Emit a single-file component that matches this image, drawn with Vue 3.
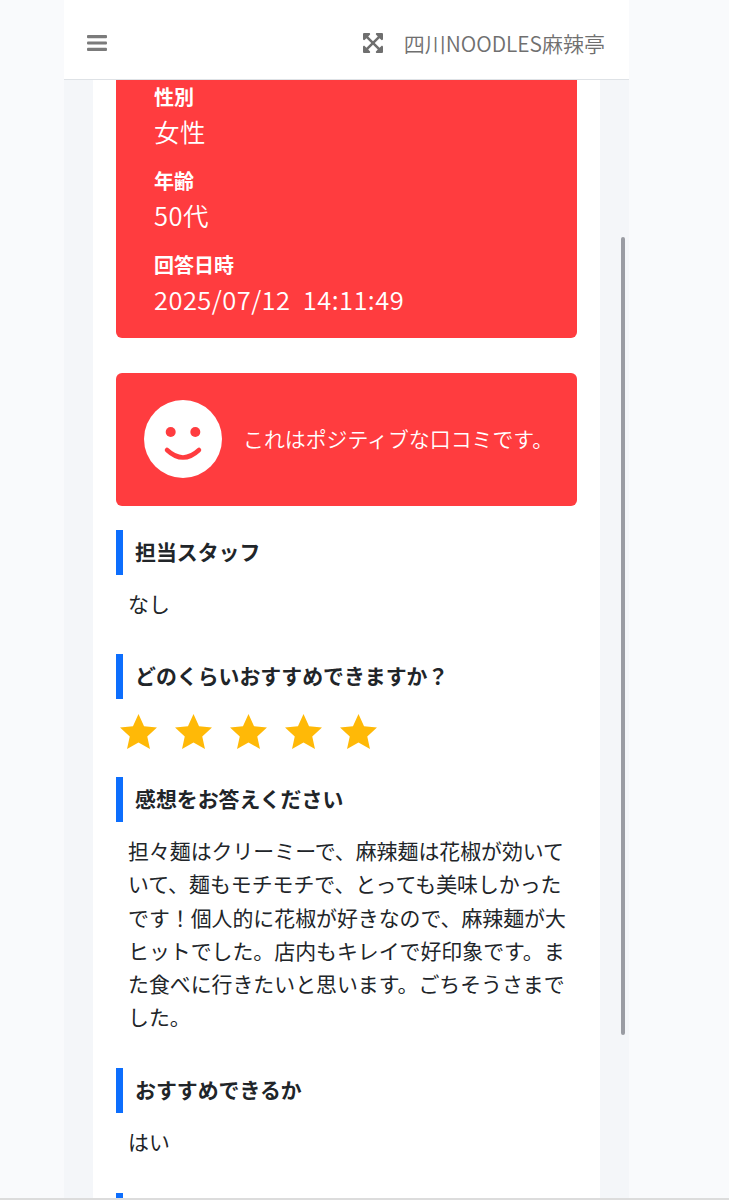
<script setup>
const infos = [
  { label: '性別', value: '女性' },
  { label: '年齢', value: '50代' },
  { label: '回答日時', value: '2025/07/12  14:11:49' },
]
const stars = [1, 2, 3, 4, 5]
</script>

<template>
  <div class="screen">
    <div class="wrapper">
      <header class="navbar">
        <svg class="menu" viewBox="0 0 20 18" width="20" height="18">
          <rect y="1" width="20" height="3.200" rx="1" fill="#7b7b7b" />
          <rect y="7.400" width="20" height="3.200" rx="1" fill="#7b7b7b" />
          <rect y="13.800" width="20" height="3.200" rx="1" fill="#7b7b7b" />
        </svg>
        <div class="nav-right">
          <svg class="expand" viewBox="0 32 448 448" width="20" height="20">
            <path d="M448 344v112a23.94 23.94 0 0 1-24 24H312c-21.39 0-32.09-25.9-17-41l36.2-36.2L224 295.6 116.77 402.9 153 439c15.09 15.1 4.39 41-17 41H24a23.94 23.94 0 0 1-24-24V344c0-21.4 25.89-32.1 41-17l36.19 36.2L184.46 256 77.18 148.7 41 185c-15.1 15.1-41 4.4-41-17V56a23.94 23.94 0 0 1 24-24h112c21.39 0 32.09 25.9 17 41l-36.2 36.2L224 216.4l107.23-107.3L295 73c-15.09-15.1-4.39-41 17-41h112a23.94 23.94 0 0 1 24 24v112c0 21.4-25.89 32.1-41 17l-36.19-36.2L263.54 256l107.28 107.3L407 327.1c15.1-15.2 41-4.5 41 16.9z" fill="#6f6f6f" />
          </svg>
          <span class="shop">四川NOODLES麻辣亭</span>
        </div>
      </header>

      <main class="content">
        <div class="card">
          <section class="panel info">
            <div v-for="info in infos" :key="info.label" class="info-row">
              <div class="info-label">{{ info.label }}</div>
              <div class="info-value">{{ info.value }}</div>
            </div>
          </section>

          <section class="panel sentiment">
            <svg class="smile" viewBox="0 0 78 78" width="78" height="78">
              <circle cx="39" cy="39" r="39" fill="#fff" />
              <circle cx="26.700" cy="32" r="5" fill="#ff3c3f" />
              <circle cx="51.300" cy="32" r="5" fill="#ff3c3f" />
              <path d="M23 50Q39 65 55 50" fill="none" stroke="#ff3c3f" stroke-width="4.500" stroke-linecap="round" />
            </svg>
            <p>これはポジティブな口コミです。</p>
          </section>

          <h2 class="heading first">担当スタッフ</h2>
          <p class="answer">なし</p>

          <h2 class="heading">どのくらいおすすめできますか？</h2>
          <div class="stars">
            <svg v-for="s in stars" :key="s" viewBox="0 0 38 36" width="37" height="35">
              <path d="M19 0l5.700 12.500L38 14l-10 9.200L30.800 36 19 29.300 7.200 36 10 23.200 0 14l13.300-1.500z" fill="#ffb907" />
            </svg>
          </div>

          <h2 class="heading after-stars">感想をお答えください</h2>
          <p class="answer long">担々麺はクリーミーで、麻辣麺は花椒が効いていて、麺もモチモチで、とっても美味しかったです！個人的に花椒が好きなので、麻辣麺が大ヒットでした。店内もキレイで好印象です。また食べに行きたいと思います。ごちそうさまでした。</p>

          <h2 class="heading">おすすめできるか</h2>
          <p class="answer">はい</p>

          <h2 class="heading"></h2>
        </div>
      </main>

      <div class="scrollbar"></div>
    </div>
  </div>
</template>

<style>
html, body {
  margin: 0;
  height: 1200px;
  overflow: hidden;
}
</style>

<style scoped>
.screen {
  height: 1198px;
  overflow: hidden;
  background: #f9fafc;
  border-bottom: 2px solid #dcdcdc;
  font-family: "Noto Sans CJK JP", "Noto Sans", sans-serif;
}
.wrapper {
  position: relative;
  width: 565px;
  height: 100%;
  margin-left: 64px;
  background: #f4f6f9;
}
.navbar {
  height: 80px;
  box-sizing: border-box;
  padding: 6px 24px 0 23px;
  display: flex;
  align-items: center;
  justify-content: space-between;
  background: #fff;
  border-bottom: 1px solid #dee2e6;
  color: #6f6f6f;
}
.nav-right {
  display: flex;
  align-items: center;
  gap: 21px;
}
.expand {
  display: block;
}
.shop {
  font-size: 21px;
  font-weight: 350;
}
.content {
  margin: 0 29px;
  background: #fff;
}
.card {
  padding: 0 23px;
}
.panel {
  background: #ff3c3f;
  color: #fff;
  border-radius: 0 0 6px 6px;
}
.info {
  padding: 2px 38px 21px;
}
.info-row + .info-row {
  margin-top: 17px;
}
.info-label {
  font-size: 20px;
  font-weight: 700;
  line-height: 30px;
}
.info-value {
  font-size: 25.500px;
  line-height: 37px;
  white-space: pre;
  font-weight: 350;
  letter-spacing: 0.45px;
}
.sentiment {
  margin-top: 35px;
  height: 133px;
  padding-left: 28px;
  border-radius: 6px;
  display: flex;
  align-items: center;
  gap: 21px;
}
.sentiment p {
  margin: 0 0 3px;
  font-size: 20.900px;
  font-weight: 350;
}
.smile {
  flex: none;
  margin-bottom: 2px;
}
.heading {
  margin: 34px 0 0;
  height: 45px;
  box-sizing: border-box;
  border-left: 7px solid #0d6efd;
  padding-left: 12px;
  font-size: 20.900px;
  font-weight: 700;
  line-height: 43px;
  color: #212529;
}
.heading.first {
  margin-top: 24px;
}
.heading.after-stars {
  margin-top: 28px;
}
.answer {
  margin: 12px 0 0;
  padding: 0 4px 0 12px;
  font-size: 20.900px;
  line-height: 33.200px;
  color: #212529;
}
.answer.long {
  margin-bottom: 35px;
}
.stars {
  margin-top: 15px;
  display: flex;
  gap: 18px;
  padding-left: 4px;
}
.stars svg {
  display: block;
}
.scrollbar {
  position: absolute;
  left: 557px;
  top: 237px;
  width: 4px;
  height: 798px;
  border-radius: 2px;
  background: #9a9ca3;
}
</style>
